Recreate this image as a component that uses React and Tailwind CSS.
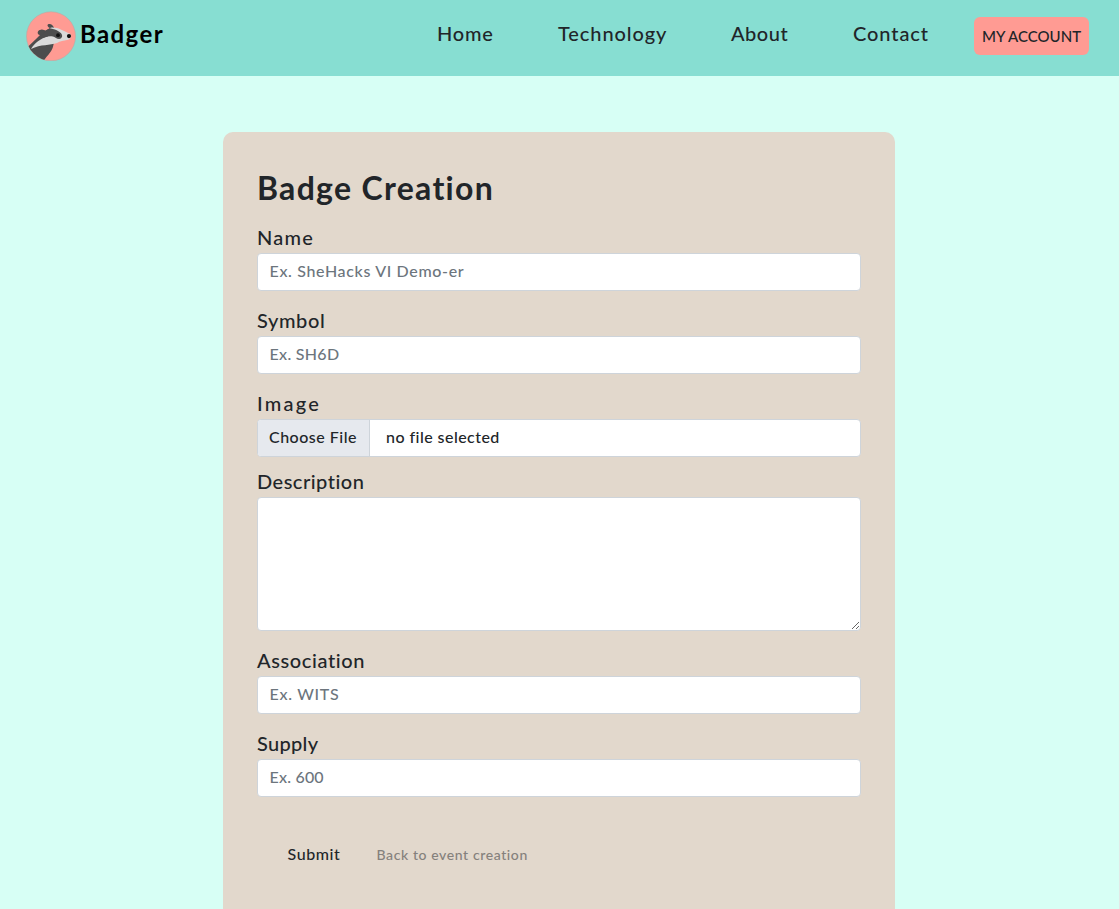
const links = [
  { name: "Home", style: "w-[57px] mr-[64px]", tracking: "tracking-[0.8px]" },
  { name: "Technology", style: "w-[109px] mr-[64px]", tracking: "tracking-[0.9px]" },
  { name: "About", style: "w-[57px] mr-[65px]", tracking: "tracking-[0.5px]" },
  { name: "Contact", style: "w-[76px] mr-[45px]", tracking: "tracking-[0.9px]" },
];

const inputStyle =
  "block h-[38px] w-full rounded border border-[#ced4da] bg-white px-[11.5px] pb-[3px] text-base font-medium text-[#212529] outline-none placeholder:text-[#6c757d] placeholder:opacity-100";

function Logo() {
  return (
    <svg className="h-[50px] w-[50px]" viewBox="0 -0.5 50 50">
      <defs>
        <clipPath id="badge">
          <circle cx="25" cy="24.8" r="24.5" />
        </clipPath>
      </defs>
      <circle cx="25" cy="24.8" r="24.5" fill="#ff9b93" stroke="#b9aaa4" strokeWidth="0.6" />
      <g clipPath="url(#badge)">
        <path d="M0 37 C4 33 9 29 14 23.5 C10.5 23.5 11 18.5 15 18.2 C17.5 17.6 19 19.6 21 18.6 L24 16.6 C20.5 15 21 12.2 23.5 12.4 C25.5 12.5 27 14 28 16 L30 25 L27.5 33 C26.5 40 22 43 17 50 L0 50 Z" fill="#4d4d4d" />
        <path d="M24.5 16.2 C31 15 37 19 44.5 22.6 C46 25.5 44.5 28 41 28.6 C38 29.6 34 29.3 31 31.5 C24 34.2 15 32.5 5 37.5 C8 32 15 26.5 22 25 Z" fill="#dadada" />
        <path d="M20 19 C21 18 23 16.8 25 17 C30 18 36 20.5 36.2 24.5 C35.6 28 32.5 28.2 29.5 26.2 C26.5 24.3 22 24.5 18 26 L13 27 Z" fill="#4d4d4d" />
      </g>
      <circle cx="32" cy="23.7" r="1.9" fill="#111" />
      <circle cx="43" cy="24.6" r="2.1" fill="#111" />
    </svg>
  );
}

function Field({ label, tracking, children }) {
  return (
    <div>
      <label className={`block h-[30px] whitespace-nowrap text-xl leading-[28px] font-medium ${tracking}`}>{label}</label>
      {children}
    </div>
  );
}

export default function App() {
  return (
    <div className="flex h-[909px] flex-col overflow-hidden border-r border-[#e2e8e6] bg-[#d7fff5] font-['Lato',sans-serif] text-[#212529]">
      <nav className="flex h-[76px] shrink-0 items-center justify-between bg-[#87ded2] pl-[26px] pr-[30px]">
        <a href="#" className="flex items-center gap-[4px] pb-1">
          <Logo />
          <span className="text-2xl leading-9 font-bold whitespace-nowrap text-black tracking-[1.4px] pb-[4px]">Badger</span>
        </a>
        <div className="flex items-center">
          {links.map((link) => (
            <a key={link.name} href="#" className={`pb-[10px] text-xl leading-[30px] font-medium whitespace-nowrap ${link.style} ${link.tracking}`}>
              {link.name}
            </a>
          ))}
          <button className="mb-[4px] h-[38px] w-[115px] rounded-md bg-[#ff9b93] text-[15px] font-medium whitespace-nowrap">
            MY ACCOUNT
          </button>
        </div>
      </nav>

      <main className="ml-[223px] mt-14 w-[672px] grow rounded-t-[10px] bg-[#e2d8cc] px-[34px] pt-[34px]">
        <h2 className="mb-4 h-[41px] text-[32px] leading-[43px] font-bold whitespace-nowrap tracking-[1.3px]">Badge Creation</h2>
        <form className="flex flex-col gap-[15px]">
          <Field label="Name" tracking="tracking-[1.2px]">
            <input className={`${inputStyle} tracking-[0.65px]`} placeholder="Ex. SheHacks VI Demo-er" />
          </Field>
          <Field label="Symbol" tracking="tracking-[0.6px]">
            <input className={`${inputStyle} tracking-[0.3px]`} placeholder="Ex. SH6D" />
          </Field>
          <Field label="Image" tracking="tracking-[2.2px]">
            <div className="flex h-[38px] overflow-hidden rounded border border-[#ced4da] bg-white text-base font-medium whitespace-nowrap">
              <button type="button" className="w-[112px] border-r border-[#ced4da] bg-[#e6e9ee] pb-[2px] pl-[11px] text-left tracking-[0.5px]">
                Choose File
              </button>
              <span className="pl-4 leading-[34px] tracking-[0.45px]">no file selected</span>
            </div>
          </Field>
          <div className="-mt-[5px]">
            <Field label="Description" tracking="tracking-[0.5px]">
              <textarea className="block h-[134px] w-full resize rounded border border-[#ced4da] bg-white px-3 py-1.5 outline-none" />
            </Field>
          </div>
          <Field label="Association" tracking="tracking-[0.6px]">
            <input className={`${inputStyle} tracking-[0.7px]`} placeholder="Ex. WITS" />
          </Field>
          <Field label="Supply" tracking="tracking-[0.3px]">
            <input className={`${inputStyle} tracking-[0.2px]`} placeholder="Ex. 600" />
          </Field>
        </form>
        <div className="mt-[46px] flex h-6 items-center pl-[30.5px] font-medium whitespace-nowrap">
          <button className="w-[89px] pb-[2px] text-left text-base tracking-[0.6px]">Submit</button>
          <a href="#" className="text-sm text-[#85817c] tracking-[0.6px]">Back to event creation</a>
        </div>
      </main>
    </div>
  );
}
